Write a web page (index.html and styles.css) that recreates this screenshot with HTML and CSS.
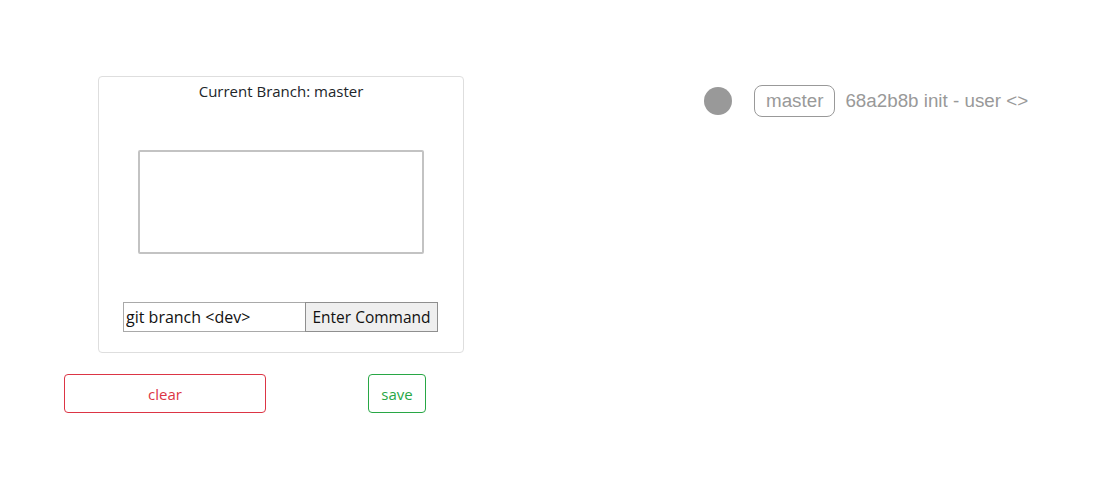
FILE: index.html
```html
<!DOCTYPE html>
<html>
<head>
<meta charset="utf-8">
<link rel="stylesheet" href="styles.css">
</head>
<body>
<div class="page">
  <div class="left">
    <div class="card">
      <div class="title">Current Branch: master</div>
      <div class="area"></div>
      <div class="cmd">
        <input class="cmd-input" type="text" value="git branch &lt;dev&gt;">
        <button class="cmd-btn">Enter Command</button>
      </div>
    </div>
    <div class="actions">
      <button class="btn btn-clear">clear</button>
      <button class="btn btn-save">save</button>
    </div>
  </div>
  <div class="graph">
    <div class="commit">
      <span class="dot"></span>
      <span class="branch">master</span>
      <span class="msg">68a2b8b init - user &lt;&gt;</span>
    </div>
  </div>
</div>
</body>
</html>
```

FILE: styles.css
```css
* { box-sizing: border-box; }
html, body { margin: 0; padding: 0; background: #fff; }
body {
  font-family: "Open Sans", "Noto Sans", sans-serif;
  color: #212529;
}
.page {
  display: flex;
  align-items: flex-start;
  padding: 76px 0 0 64px;
}
.left {
  width: 400px;
}
.card {
  margin-left: 34px;
  width: 366px;
  height: 277px;
  border: 1px solid #dedede;
  border-radius: 4px;
  display: flex;
  flex-direction: column;
  align-items: center;
  padding-top: 4px;
}
.title {
  font-size: 15px;
  line-height: 20px;
  color: #212529;
}
.area {
  margin-top: 49px;
  width: 286px;
  height: 104px;
  border: 2px solid #c3c3c3;
  border-radius: 2px;
}
.cmd {
  margin-top: 48px;
  display: flex;
  height: 30px;
  margin-left: -1px;
}
.cmd-input {
  width: 182px;
  height: 30px;
  border: 1px solid #a9a9a9;
  border-right: none;
  padding: 0 2px;
  font-family: inherit;
  font-size: 16px;
  color: #111;
  margin: 0;
  outline: none;
}
.cmd-btn {
  width: 133px;
  height: 30px;
  border: 1px solid #8f8f8f;
  background: #efefef;
  font-family: inherit;
  font-size: 15.5px;
  color: #111;
  padding: 0;
  margin: 0;
}
.actions {
  display: flex;
  gap: 102px;
  margin-top: 21px;
}
.btn {
  height: 39px;
  background: #fff;
  border-radius: 4px;
  font-family: inherit;
  font-size: 15px;
  padding: 0;
}
.btn-clear {
  width: 202px;
  border: 1px solid #dc3545;
  color: #dc3545;
}
.btn-save {
  width: 58px;
  border: 1px solid #28a745;
  color: #28a745;
}
.graph {
  margin-left: 240px;
  padding-top: 9px;
}
.commit {
  display: flex;
  align-items: center;
  font-family: "Liberation Sans", Arial, sans-serif;
  font-size: 18.8px;
  color: #999;
}
.dot {
  width: 28px;
  height: 28px;
  border-radius: 50%;
  background: #999;
  margin-right: 22px;
}
.branch {
  height: 32px;
  line-height: 30px;
  padding: 0 11px;
  border: 1px solid #999;
  border-radius: 8px;
  margin-right: 10px;
}
```
